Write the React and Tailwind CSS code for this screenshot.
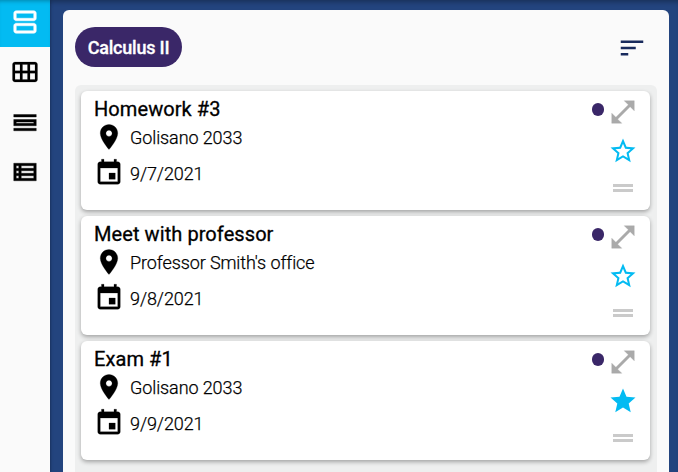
import React from "react";

const PATHS = {
  agenda:
    "M19 13H5c-1.1 0-2 .9-2 2v4c0 1.1.9 2 2 2h14c1.1 0 2-.9 2-2v-4c0-1.1-.9-2-2-2zm0 6H5v-4h14v4zm0-16H5c-1.1 0-2 .9-2 2v4c0 1.1.9 2 2 2h14c1.1 0 2-.9 2-2V5c0-1.1-.9-2-2-2zm0 6H5V5h14v4z",
  month:
    "M20 4H4c-1.1 0-2 .9-2 2v12c0 1.1.9 2 2 2h16c1.1 0 2-.9 2-2V6c0-1.1-.9-2-2-2zM8 11H4V6h4v5zm6 0h-4V6h4v5zm6 0h-4V6h4v5zM8 18H4v-5h4v5zm6 0h-4v-5h4v5zm6 0h-4v-5h4v5z",
  day: "M3 17h18v2H3zm16-5v1H5v-1h14m2-2H3v5h18v-5zM3 6h18v2H3z",
  list: "M3 5v14h18V5H3zm4 2v2H5V7h2zm-2 6v-2h2v2H5zm0 2h2v2H5v-2zm14 2H9v-2h10v2zm0-4H9v-2h10v2zm0-4H9V7h10v2z",
  sort: "M3 18h6v-2H3v2zM3 6v2h18V6H3zm0 7h12v-2H3v2z",
  place:
    "M12 2C8.13 2 5 5.13 5 9c0 5.25 7 13 7 13s7-7.75 7-13c0-3.87-3.13-7-7-7zm0 9.5c-1.38 0-2.5-1.12-2.5-2.5s1.12-2.5 2.5-2.5 2.5 1.12 2.5 2.5-1.12 2.5-2.5 2.5z",
  event:
    "M17 12h-5v5h5v-5zM16 1v2H8V1H6v2H5c-1.11 0-1.99.9-1.99 2L3 19c0 1.1.89 2 2 2h14c1.1 0 2-.9 2-2V5c0-1.1-.9-2-2-2h-1V1h-2zm3 18H5V8h14v11z",
  expand: "M21 11V3h-8l3.29 3.29-10 10L3 13v8h8l-3.29-3.29 10-10z",
  star: "M12 17.27L18.18 21l-1.64-7.03L22 9.24l-7.19-.61L12 2 9.19 8.63 2 9.24l5.46 4.73L5.82 21z",
  starOutline:
    "M22 9.24l-7.19-.62L12 2 9.19 8.63 2 9.24l5.46 4.73L5.82 21 12 17.27 18.18 21l-1.63-7.03L22 9.24zM12 15.4l-3.76 2.27 1-4.28-3.32-2.88 4.38-.38L12 6.1l1.71 4.04 4.38.38-3.32 2.88 1 4.28L12 15.4z",
  drag: "M4 8.8h16v2.4H4zM4 12.8h16v2.4H4z",
};

function Icon({ name, className = "" }) {
  return (
    <svg viewBox="0 0 24 24" fill="currentColor" aria-hidden="true" className={`block size-[30px] shrink-0 ${className}`}>
      <path d={PATHS[name]} />
    </svg>
  );
}

const TASKS = [
  { title: "Homework #3", place: "Golisano 2033", date: "9/7/2021", starred: false },
  { title: "Meet with professor", place: "Professor Smith's office", date: "9/8/2021", starred: false },
  { title: "Exam #1", place: "Golisano 2033", date: "9/9/2021", starred: true },
];

function Detail({ icon, children }) {
  return (
    <div className="flex h-9 items-start gap-1.5">
      <Icon name={icon} className="stroke-current stroke-[0.2]" />
      <span className="pt-1 text-[18px] leading-6 font-light tracking-[-0.1px] [-webkit-text-stroke:0.25px_black]">
        {children}
      </span>
    </div>
  );
}

function TaskCard({ task }) {
  return (
    <article className="flex h-[119px] shrink-0 justify-between rounded-md bg-white pr-3 pl-[13px] shadow-[0_2px_4px_rgba(0,0,0,0.32)]">
      <div className="pt-1">
        <h2 className="h-[27px] text-[20px] leading-7 font-normal tracking-[0.08px] [-webkit-text-stroke:0.3px_black]">
          {task.title}
        </h2>
        <Detail icon="place">{task.place}</Detail>
        <Detail icon="event">{task.date}</Detail>
      </div>
      <div className="flex gap-1 pt-1.5">
        <span className="mt-1.5 h-[13px] w-3 rounded-full bg-[#3a2768]" />
        <div className="flex flex-col">
          <Icon name="expand" className="stroke-current stroke-[0.3] text-[#aaaaaa]" />
          <Icon name={task.starred ? "star" : "starOutline"} className="mt-[9px] text-[#03bbf2]" />
          <Icon name="drag" className="mt-[7px] text-[#cacaca]" />
        </div>
      </div>
    </article>
  );
}

export default function App() {
  return (
    <div className="flex h-[472px] w-[678px] overflow-hidden bg-[#23447e] font-[Roboto,sans-serif] text-black">
      <nav className="z-10 flex w-[50px] shrink-0 flex-col bg-[#fafafa] shadow-[0_0_3px_rgba(0,0,0,0.4)]">
        <button className="flex h-[47px] justify-center bg-[#03bbf2] pt-[7px] text-white shadow-[inset_0_4px_4px_-3px_rgba(0,0,0,0.3)]">
          <Icon name="agenda" className="stroke-current stroke-[0.4]" />
        </button>
        <button className="flex h-[50px] items-center justify-center">
          <Icon name="month" className="stroke-current stroke-[0.15]" />
        </button>
        <button className="flex h-[50px] items-center justify-center">
          <Icon name="day" className="stroke-current stroke-[0.3]" />
        </button>
        <button className="flex h-[50px] items-center justify-center">
          <Icon name="list" className="stroke-current stroke-[0.3]" />
        </button>
      </nav>
      <main className="flex-1 pt-2.5 pr-[9px] pl-[13px] shadow-[inset_0_5px_5px_-3px_rgba(0,0,0,0.3)]">
        <section className="flex h-[480px] flex-col rounded-md bg-[#fafafa] px-3 pt-[17px]">
          <header className="flex h-[58px] items-start justify-between pr-2.5">
            <div className="flex h-10 w-[107px] items-center justify-center rounded-full bg-[#3a2768] text-[18px] font-medium tracking-[-0.22px] text-white [-webkit-text-stroke:0.3px_white]">
              Calculus II
            </div>
            <Icon name="sort" className="mt-[6px] text-[#182a5c]" />
          </header>
          <div className="flex flex-1 flex-col gap-1.5 rounded-md bg-[#eeefef] pt-1.5 pr-[7px] pl-1.5">
            {TASKS.map((task) => (
              <TaskCard key={task.title} task={task} />
            ))}
          </div>
        </section>
      </main>
    </div>
  );
}
